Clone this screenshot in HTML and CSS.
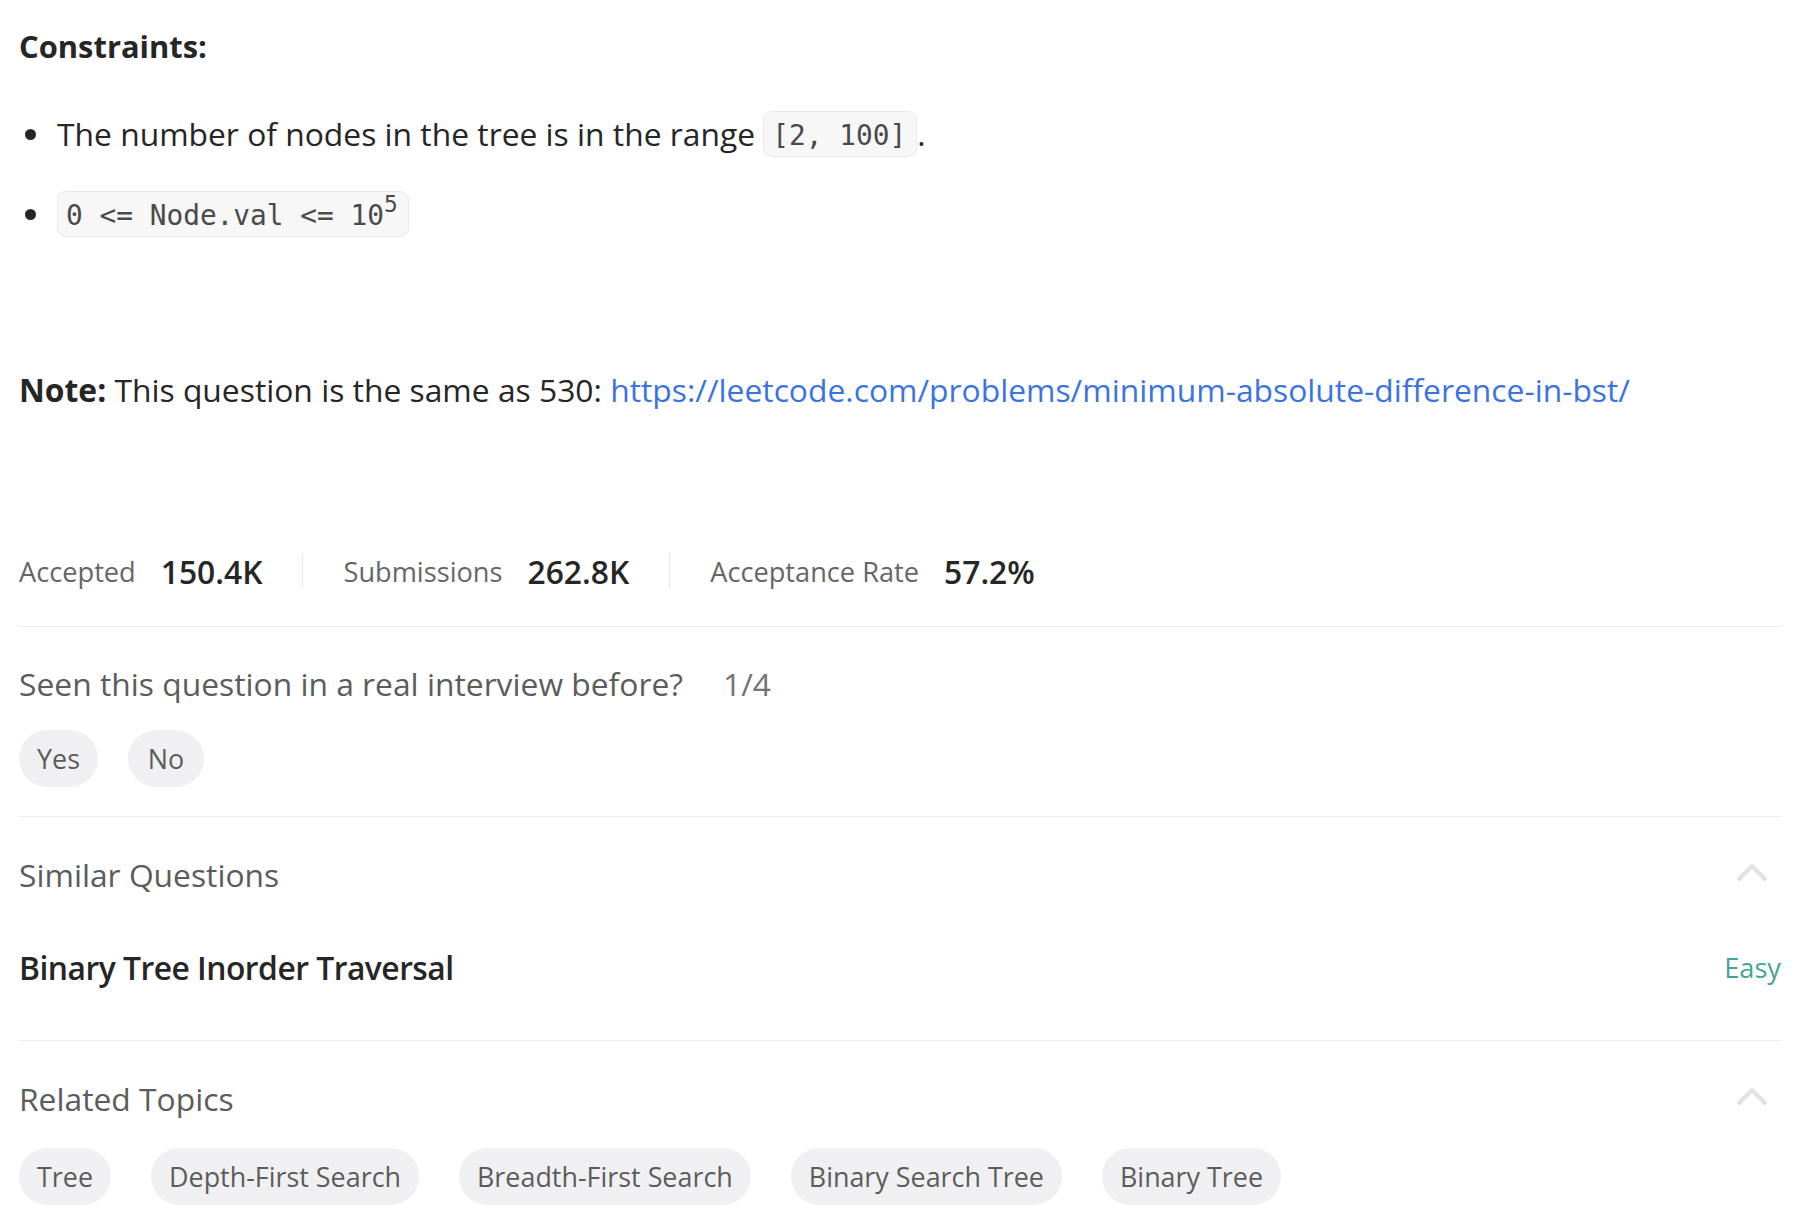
FILE: index.html
```html
<!DOCTYPE html>
<html lang="en">
<head>
<meta charset="utf-8">
<title>Problem details</title>
<link rel="stylesheet" href="styles.css">
</head>
<body>
<div class="page">
  <p class="heading"><strong>Constraints:</strong></p>
  <ul class="constraints">
    <li><span>The number of nodes in the tree is in the range <code>[2, 100]</code>.</span></li>
    <li><span><code>0 &lt;= Node.val &lt;= 10<sup>5</sup></code></span></li>
  </ul>
  <p class="note"><strong>Note:</strong> This question is the same as 530: <a href="#">https://leetcode.com/problems/minimum-absolute-difference-in-bst/</a></p>

  <div class="stats">
    <span class="stat-label">Accepted</span><span class="stat-value">150.4K</span>
    <span class="divider"></span>
    <span class="stat-label">Submissions</span><span class="stat-value">262.8K</span>
    <span class="divider"></span>
    <span class="stat-label">Acceptance Rate</span><span class="stat-value">57.2%</span>
  </div>

  <div class="section interview">
    <div class="interview-q"><span>Seen this question in a real interview before?</span><span class="count">1/4</span></div>
    <div class="pills">
      <span class="pill">Yes</span>
      <span class="pill">No</span>
    </div>
  </div>

  <div class="section similar">
    <div class="section-head">
      <span class="section-title">Similar Questions</span>
      <svg class="chevron" width="30" height="18" viewBox="0 0 30 18"><path d="M2 16 L15 3 L28 16" fill="none" stroke="#e2e2e2" stroke-width="4" stroke-linecap="round" stroke-linejoin="round"/></svg>
    </div>
    <div class="question-row">
      <span class="question-title">Binary Tree Inorder Traversal</span>
      <span class="easy">Easy</span>
    </div>
  </div>

  <div class="section topics">
    <div class="section-head">
      <span class="section-title">Related Topics</span>
      <svg class="chevron" width="30" height="18" viewBox="0 0 30 18"><path d="M2 16 L15 3 L28 16" fill="none" stroke="#e2e2e2" stroke-width="4" stroke-linecap="round" stroke-linejoin="round"/></svg>
    </div>
    <div class="tags">
      <span class="tag">Tree</span>
      <span class="tag">Depth-First Search</span>
      <span class="tag">Breadth-First Search</span>
      <span class="tag">Binary Search Tree</span>
      <span class="tag">Binary Tree</span>
    </div>
  </div>
</div>
</body>
</html>
```

FILE: styles.css
```css
html, body {
  margin: 0;
  padding: 0;
  background: #ffffff;
}

body {
  font-family: "Open Sans", "Noto Sans", "Liberation Sans", sans-serif;
  font-size: 31.8px;
  color: #262626;
}

.page {
  padding: 19px 37px 0 19px;
}

.heading {
  margin: 0;
  line-height: 54px;
}

.heading strong {
  font-weight: 700;
  font-size: 30.9px;
}

.note strong {
  font-weight: 700;
}

.constraints {
  list-style: none;
  margin: 38px 0 0 0;
  padding-left: 6px;
  line-height: 46px;
}

.constraints li {
  display: flex;
  align-items: center;
  margin-bottom: 34px;
}

.constraints li::before {
  content: "";
  flex: none;
  width: 11px;
  height: 11px;
  border-radius: 50%;
  background: #262626;
  margin-right: 21px;
}

.constraints li:last-child {
  margin-bottom: 0;
}

code {
  display: inline-block;
  font-family: "DejaVu Sans Mono", "Liberation Mono", monospace;
  font-size: 27.8px;
  line-height: 41px;
  padding: 3px 10px 0 8px;
  color: #4a4a4a;
  background: #f7f7f8;
  border: 1px solid #e8e8e8;
  border-radius: 9px;
  vertical-align: top;
}

code sup {
  font-size: 0.82em;
  line-height: 0;
  vertical-align: 0.55em;
}

.note {
  margin: 126px 0 0 0;
  line-height: 54px;
}

.note a {
  color: #3b74e2;
  text-decoration: none;
}

.stats {
  margin-top: 127px;
  display: flex;
  align-items: center;
  height: 54px;
  padding-bottom: 28px;
  border-bottom: 1px solid #ececec;
}

.stat-label {
  font-size: 27.2px;
  color: #666666;
}

.stat-value {
  margin-left: 25px;
  font-weight: 600;
  color: #262626;
}

.divider {
  width: 1px;
  height: 34px;
  background: #e6e6e6;
  margin: 0 40px;
}

.section {
  border-bottom: 1px solid #ececec;
}

.interview {
  padding: 30px 0 29px 0;
}

.interview-q {
  display: flex;
  align-items: center;
  line-height: 54px;
  color: #5c5c5c;
}

.count {
  margin-left: 40px;
  color: #737373;
}

.pills {
  display: flex;
  gap: 30px;
  margin-top: 19px;
}

.pill,
.tag {
  display: inline-flex;
  align-items: center;
  justify-content: center;
  height: 57px;
  padding: 0 18px;
  border-radius: 29px;
  background: #f0f0f2;
  font-size: 26.9px;
  color: #5c5c5c;
}

.pill {
  min-width: 76px;
  box-sizing: border-box;
}

.similar {
  padding: 31px 0 45px 0;
}

.section-head {
  display: flex;
  align-items: center;
  justify-content: space-between;
  line-height: 54px;
}

.section-title {
  color: #5c5c5c;
}

.chevron {
  display: block;
  margin: 0 14px 6px 0;
}

.question-row {
  margin-top: 39px;
  display: flex;
  align-items: center;
  justify-content: space-between;
  line-height: 54px;
}

.question-title {
  font-weight: 600;
  letter-spacing: -0.5px;
  color: #262626;
}

.easy {
  font-size: 27.2px;
  font-weight: 500;
  color: #45a594;
}

.topics {
  border-bottom: none;
  padding-top: 31px;
}

.tags {
  display: flex;
  gap: 40px;
  margin-top: 22px;
}
```
